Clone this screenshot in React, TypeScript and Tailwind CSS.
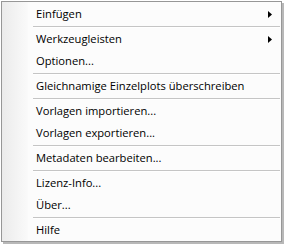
import React from "react";

type Entry = { label?: string; sub?: boolean; sep?: boolean };

const entries: Entry[] = [
  { label: "Einfügen", sub: true },
  { sep: true },
  { label: "Werkzeugleisten", sub: true },
  { label: "Optionen..." },
  { sep: true },
  { label: "Gleichnamige Einzelplots überschreiben" },
  { sep: true },
  { label: "Vorlagen importieren..." },
  { label: "Vorlagen exportieren..." },
  { sep: true },
  { label: "Metadaten bearbeiten..." },
  { sep: true },
  { label: "Lizenz-Info..." },
  { label: "Über..." },
  { sep: true },
  { label: "Hilfe" },
];

const Arrow = () => (
  <svg width="4" height="7" viewBox="0 0 4 7" className="mr-[9px]">
    <path d="M0 0 L4 3.5 L0 7 Z" fill="#000" />
  </svg>
);

export default function App() {
  return (
    <div className="w-[284px] h-[244px] bg-white relative overflow-hidden">
      <div className="ml-[1px] mt-[1px] w-[281px] h-[241px] border border-[#979797] bg-[#fcfcfc] flex shadow-[2px_2px_0_#b8b8b8]">
        <div className="w-[26px] shrink-0 bg-gradient-to-r from-[#ebebeb] to-[#fafafa]" />
        <div className="flex-1 pt-[1px] font-['Open_Sans','Noto_Sans',sans-serif] text-[11.2px] text-black">
          {entries.map((e, i) =>
            e.sep ? (
              <div key={i} className="h-[3px] pt-[1px] ml-[5px] mr-[1px]">
                <div className="h-[1px] bg-[#c5c5c5]" />
                <div className="h-[1px] bg-white" />
              </div>
            ) : (
              <div key={i} className="h-[22px] flex items-center justify-between pl-[8px]">
                <span className="leading-none whitespace-nowrap">{e.label}</span>
                {e.sub && <Arrow />}
              </div>
            )
          )}
        </div>
      </div>
    </div>
  );
}
